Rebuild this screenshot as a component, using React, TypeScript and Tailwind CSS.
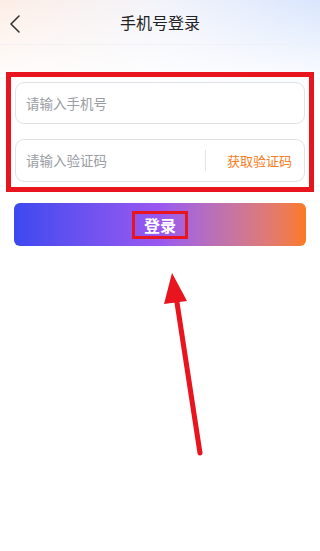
const font = { fontFamily: '"Noto Sans CJK SC", "Noto Sans", sans-serif' };

const App = () => {
  return (
    <div className="relative w-[320px] h-[551px] bg-white overflow-hidden" style={font}>
      <div className="absolute inset-x-0 top-0 h-[90px] bg-gradient-to-r from-[#fdeee6] via-[#f3f4fb] to-[#d9e6fd]" />
      <div className="absolute inset-x-0 top-0 h-[90px] bg-gradient-to-b from-transparent to-white" />

      <header className="relative flex items-center h-[45px] border-b border-[#eef0f4]/70">
        <svg className="absolute left-0 top-0" width="30" height="45" viewBox="0 0 30 45">
          <polyline points="19,16 11,24 19,32" fill="none" stroke="#333" strokeWidth="1.6" strokeLinecap="round" strokeLinejoin="round" />
        </svg>
        <h1 className="flex-1 text-center text-[16px] text-[#222]">手机号登录</h1>
      </header>

      <div className="relative mt-[27px] mx-[6px] border-[5px] border-[#e8141e] px-[4px] pt-[5px] pb-[5px] flex flex-col gap-[15px]">
        <div className="h-[42px] rounded-[9px] border border-[#dfe3e8] bg-white flex items-center px-[10px]">
          <span className="text-[13.5px] text-[#9a9da3]">请输入手机号</span>
        </div>
        <div className="h-[43px] rounded-[9px] border border-[#dfe3e8] bg-white flex items-center pl-[10px] pr-[12px]">
          <span className="flex-1 text-[13.5px] text-[#9a9da3]">请输入验证码</span>
          <span className="w-px h-[21px] bg-[#e2e4e8] mr-[21px]" />
          <span className="text-[13px] text-[#f47b20]">获取验证码</span>
        </div>
      </div>

      <div className="relative mt-[11px] mx-[14px] h-[43px] rounded-[6px] bg-gradient-to-r from-[#3c48ef] via-[#9a57f0] to-[#fb7a1a] flex items-center justify-center">
        <span className="border-[3px] border-[#e8141e] px-[9px] text-[16px] font-bold text-white leading-[22px]">登录</span>
      </div>

      <svg className="absolute left-0 top-0" width="320" height="551" viewBox="0 0 320 551">
        <line x1="200" y1="453" x2="176" y2="296" stroke="#e8141e" strokeWidth="5" strokeLinecap="round" />
        <polygon points="172,273 164,304 187,301" fill="#e8141e" />
      </svg>
    </div>
  );
};

export default App;
